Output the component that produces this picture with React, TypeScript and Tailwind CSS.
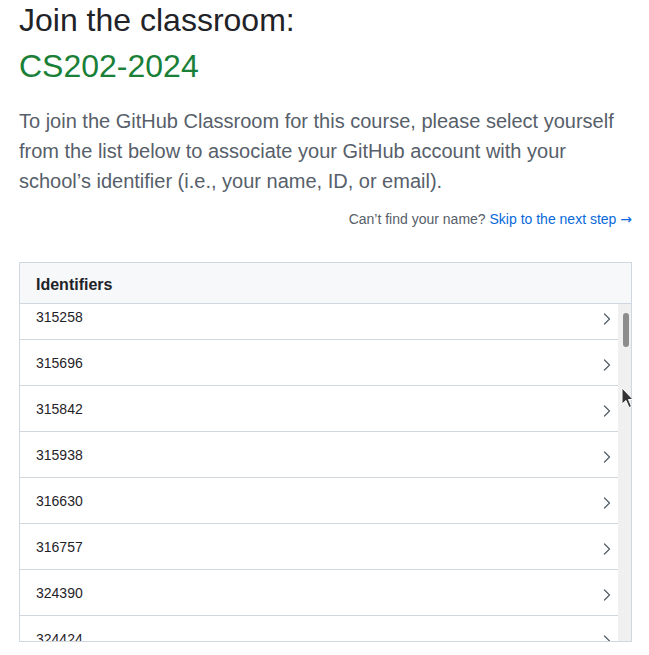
import React from "react";

const ids = ["315258", "315696", "315842", "315938", "316630", "316757", "324390", "324424"];

function Chevron() {
  return (
    <svg width="8" height="12" viewBox="0 0 8 12" fill="none" className="shrink-0 mt-[2px]">
      <path d="M1.5 1 L6.5 6 L1.5 11" stroke="#57606a" strokeWidth="1.3" strokeLinecap="round" strokeLinejoin="round" />
    </svg>
  );
}

export default function App() {
  return (
    <div
      className="relative w-[649px] h-[655px] bg-white overflow-hidden pl-[19px] pr-[17px]"
      style={{ fontFamily: '"Liberation Sans", Arial, sans-serif' }}
    >
      <h1 className="text-[32px] leading-[40px] text-[#1f2328] font-normal">Join the classroom:</h1>
      <h2 className="mt-[6px] text-[32px] leading-[40px] text-[#1a7f37] font-normal">CS202-2024</h2>
      <p className="mt-[20px] text-[20px] leading-[30px] text-[#57606a]">
        To join the GitHub Classroom for this course, please select yourself from the list below to associate your GitHub account with your school’s identifier (i.e., your name, ID, or email).
      </p>
      <div className="mt-[13px] text-right text-[14px] leading-[20px] text-[#57606a]">
        Can’t find your name?{" "}
        <span className="text-[#0969da]">
          Skip to the next step{" "}
          <span style={{ fontFamily: '"DejaVu Sans", sans-serif' }}>→</span>
        </span>
      </div>
      <div className="mt-[33px] h-[380px] border border-[#d0d7de] flex flex-col">
        <div className="h-[41px] shrink-0 border-b border-[#d0d7de] bg-[#f6f8fa] px-[16px] pt-[4px] flex items-center text-[16px] font-bold text-[#1f2328]">
          Identifiers
        </div>
        <div className="flex-1 flex min-h-0">
          <div className="flex-1 overflow-hidden">
            <div className="mt-[-10px]">
              {ids.map((id) => (
                <div
                  key={id}
                  className="h-[46px] border-b border-[#d0d7de] flex items-center justify-between pl-[16px] pr-[7px] pt-[2px] text-[14px] text-[#1f2328]"
                >
                  <span>{id}</span>
                  <Chevron />
                </div>
              ))}
            </div>
          </div>
          <div className="w-[13px] shrink-0 bg-[#f0f0f0] pt-[9px] flex justify-center">
            <div className="w-[6px] h-[34px] rounded-full bg-[#8c8c8c] ml-[2px]" />
          </div>
        </div>
      </div>
      <svg className="absolute left-[621px] top-[387px]" width="13" height="22" viewBox="0 0 13 22">
        <path d="M1 1 L1 17 L5 13.5 L8 20.5 L10.5 19.5 L7.5 12.5 L12 12.5 Z" fill="#333" stroke="#fff" strokeWidth="1" strokeLinejoin="round" />
      </svg>
    </div>
  );
}
